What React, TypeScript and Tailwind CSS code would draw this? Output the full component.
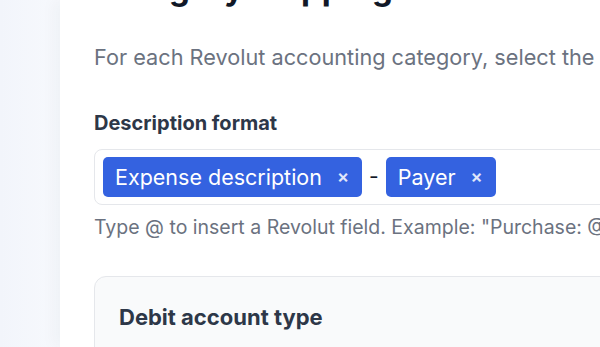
const Token = ({ label }: { label: string }) => {
  return (
    <span className="flex h-10 items-center rounded-[5px] bg-[#3462e0] pl-3 pr-[13px] text-[21.5px] text-white">
      <span>{label}</span>
      <span className="ml-[15px] text-[18px] leading-none font-semibold text-white/85">×</span>
    </span>
  );
};

const App = () => {
  return (
    <div
      className="flex h-[347px] w-[600px] overflow-hidden bg-white"
      style={{ fontFamily: "Inter, 'Noto Sans', sans-serif" }}
    >
      <aside className="w-[60px] shrink-0 bg-gradient-to-r from-[#f2f5fb] to-[#f7f9fd]" />

      <main className="relative flex-1 overflow-hidden bg-white shadow-[-6px_0_14px_rgba(30,41,59,0.04)]">
        <div className="w-[900px] pl-[34px]">
          <h1 className="mt-[-32px] text-[33px] leading-10 font-bold whitespace-nowrap text-[#111827]">
            Category mapping
          </h1>

          <p className="mt-[35px] text-[21.7px] leading-7 whitespace-nowrap text-[#6b7280]">
            For each Revolut accounting category, select the matching account in your
            accounting software.
          </p>

          <h3 className="mt-[38px] text-[20px] leading-7 font-bold text-[#2d3748]">
            Description format
          </h3>

          <div className="mt-3 flex items-center gap-[7px] rounded-lg border border-[#e5e7eb] p-[7px] pl-2">
            <Token label="Expense description" />
            <span className="text-[21px] text-[#111827]">-</span>
            <Token label="Payer" />
          </div>

          <p className="mt-2.5 text-[19.5px] leading-6 whitespace-nowrap text-[#6b7280]">
            Type @ to insert a Revolut field. Example: "Purchase: @Expense description"
          </p>

          <section className="mt-[37px] h-[200px] rounded-xl border border-[#e5e7eb] bg-[#f9fafb] px-6 pt-[26px]">
            <h3 className="text-[22px] leading-7 font-bold text-[#2d3748]">Debit account type</h3>
          </section>
        </div>
      </main>
    </div>
  );
};

export default App;
